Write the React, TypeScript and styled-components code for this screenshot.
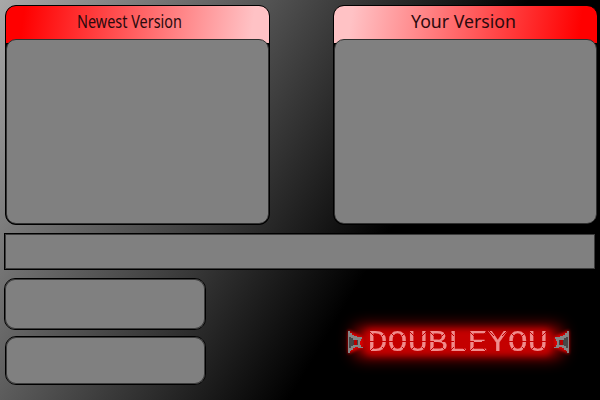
import React from "react";
import styled, { createGlobalStyle } from "styled-components";

const GlobalStyle = createGlobalStyle`
  body { margin: 0; background: #000; }
  * { box-sizing: border-box; }
`;

const Page = styled.main`
  width: 600px;
  height: 400px;
  overflow: hidden;
  padding: 5px 2px 0 4px;
  display: flex;
  flex-direction: column;
  background: linear-gradient(121deg, #a8a8a8 0%, #4b4b4b 35%, #000 63%);
`;

const Versions = styled.div`
  display: flex;
  justify-content: space-between;
  padding-left: 1px;
`;

const Card = styled.section<{ $from: string; $to: string }>`
  width: 265px;
  height: 220px;
  border: 1px solid #000;
  border-radius: 11px;
  overflow: hidden;
  display: flex;
  flex-direction: column;
  background:
    linear-gradient(98deg, ${(p) => p.$from} 7%, ${(p) => p.$to} 93%) 0 0 / 100% 37px no-repeat,
    #000;
`;

const CardHeader = styled.header`
  height: 33px;
  flex: none;
`;

const CardBody = styled.div`
  flex: 1;
  border: 1px solid #303030;
  border-radius: 10px;
  background: #808080;
`;

const Title = styled.svg`
  display: block;
  width: 263px;
  height: 33px;
  font: 18px "Noto Sans", "Open Sans", sans-serif;
  fill: #2b0a0d;
`;

const StatusBar = styled.div`
  width: 592px;
  height: 37px;
  margin-top: 8px;
  border: 1px solid #000;
  background: #808080;
  box-shadow: inset 0 0 0 1px #3c3c3c;
`;

const Footer = styled.div`
  display: flex;
  margin-top: 8px;
`;

const Buttons = styled.div`
  width: 202px;
  display: flex;
  flex-direction: column;
  align-items: flex-end;
  gap: 6px;
`;

const Button = styled.div<{ $width: number; $height: number }>`
  width: ${(p) => p.$width}px;
  height: ${(p) => p.$height}px;
  border: 1px solid #000;
  border-radius: 11px;
  background: #808080;
  box-shadow: inset 0 0 0 1px #3c3c3c;
`;

const Logo = styled.svg`
  display: block;
  width: 270px;
  height: 90px;
  margin: 20px 0 0 114px;
  overflow: visible;
`;

const LogoText = styled.text`
  font: 29px "Liberation Mono", monospace;
  fill: #f08c8c;
  stroke: #f08c8c;
  stroke-width: 0.2px;
`;

function Speaker() {
  return (
    <g shapeRendering="crispEdges">
      <path d="M0 0h2v2h2v2h2v1h3v1h5v2h-1v2h-1v4h1v2h2v1h-5v-1h-3v1h-2v2h-2v1h-1v2h-2z" fill="#868686" />
      <path d="M1 6h2v1h2v8h-2v2h-2z" fill="#484848" />
      <path d="M5 9h5v5h-5z" fill="#424242" />
      <path d="M6 9h3v5h-3z" fill="#b80000" />
    </g>
  );
}

export default function App() {
  return (
    <Page>
      <GlobalStyle />
      <Versions>
        <Card $from="#ff0000" $to="#ffc2c5">
          <CardHeader>
            <Title><text x="71" y="22" textLength="105" lengthAdjust="spacingAndGlyphs">Newest Version</text></Title>
          </CardHeader>
          <CardBody />
        </Card>
        <Card $from="#ffc2c5" $to="#ff0000">
          <CardHeader>
            <Title><text x="77" y="22" textLength="105" lengthAdjust="spacingAndGlyphs">Your Version</text></Title>
          </CardHeader>
          <CardBody />
        </Card>
      </Versions>
      <StatusBar />
      <Footer>
        <Buttons>
          <Button $width={202} $height={52} />
          <Button $width={201} $height={49} />
        </Buttons>
        <Logo viewBox="320 298 270 90">
          <defs>
            <filter id="halo" x="-20%" y="-150%" width="140%" height="400%"><feGaussianBlur stdDeviation="8" /></filter>
            <filter id="glow" x="-20%" y="-100%" width="140%" height="300%"><feGaussianBlur stdDeviation="3" /></filter>
            <filter id="rim" x="-50%" y="-50%" width="200%" height="200%"><feGaussianBlur stdDeviation="1.5" /></filter>
            <pattern id="segments" x="368" y="330" width="20" height="24" patternUnits="userSpaceOnUse">
              <rect width="20" height="24" fill="#fff" />
              <path d="M1 1l5 5M19 1l-5 5M1 22l5-5M19 22l-5-5M0 11.5h6M14 11.5h6" stroke="#000" strokeWidth="1" />
            </pattern>
            <mask id="cuts" maskUnits="userSpaceOnUse" x="360" y="325" width="200" height="34">
              <rect x="360" y="325" width="200" height="34" fill="url(#segments)" />
            </mask>
          </defs>
          <rect x="354" y="327" width="208" height="30" rx="8" fill="#b80000" filter="url(#halo)" />
          <rect x="365" y="329" width="186" height="26" rx="6" fill="#c40000" filter="url(#glow)" />
          <path d="M348 330l15 7v10l-15 7zM569 330l-15 7v10l15 7z" fill="#e00000" filter="url(#rim)" />
          <g mask="url(#cuts)">
            <LogoText transform="translate(367.6 351) scale(1.15 1)">DOUBLEYOU</LogoText>
          </g>
          <g transform="translate(348 331)"><Speaker /></g>
          <g transform="translate(569 331) scale(-1 1)"><Speaker /></g>
        </Logo>
      </Footer>
    </Page>
  );
}
